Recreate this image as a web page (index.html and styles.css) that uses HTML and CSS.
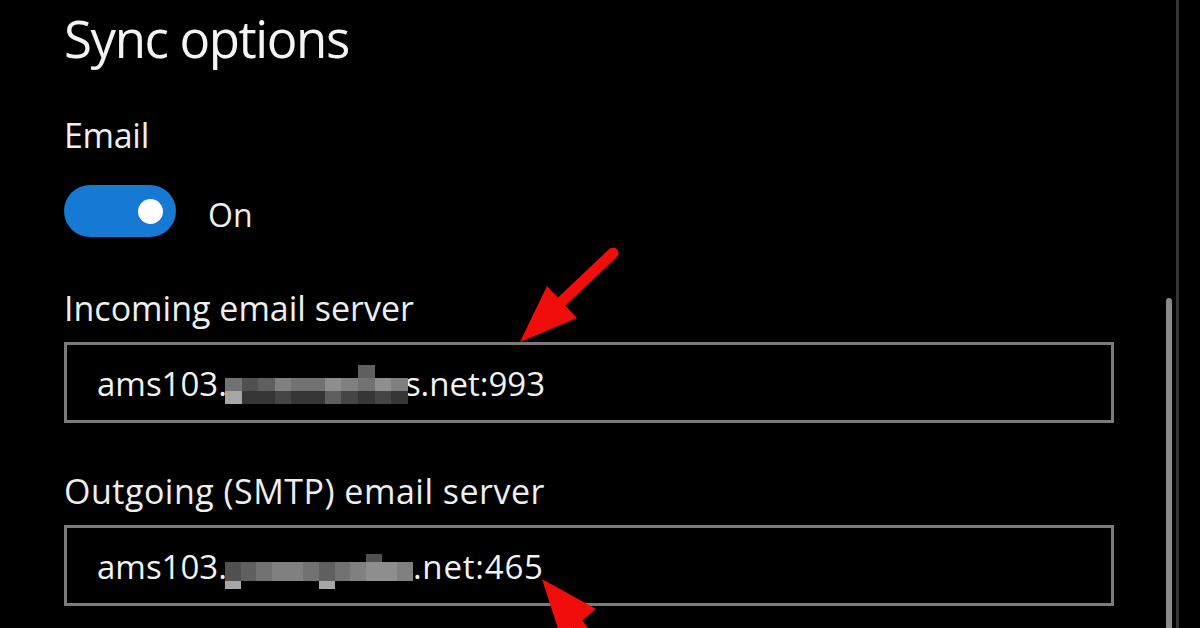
FILE: index.html
```html
<!DOCTYPE html>
<html lang="en">
<head>
<meta charset="utf-8">
<title>Sync options</title>
<link rel="stylesheet" href="styles.css">
</head>
<body>
<div class="page">
  <main class="panel">
    <h1 class="title">Sync options</h1>
    <div class="label label-email">Email</div>
    <div class="toggle-row">
      <span class="toggle"><span class="knob"></span></span>
      <span class="toggle-text">On</span>
    </div>
    <div class="label label-field">Incoming email server</div>
    <div class="field">
      <span class="val">ams103.</span><span class="pix pix-a"><i></i><i></i><i></i><i></i><i></i><i></i><i></i><i></i><i class="g4"></i><i></i><i></i><i class="g5"></i><i class="g3"></i><i class="g4"></i><i class="g6"></i><i class="g5"></i><i class="g5"></i><i class="g7"></i><i class="g6"></i><i class="g5"></i><i class="g7"></i><i class="g6"></i><i class="g8"></i><i class="g1"></i><i class="g1"></i><i class="g2"></i><i class="g1"></i><i class="g1"></i><i class="g4"></i><i class="g2"></i><i class="g1"></i><i class="g2"></i><i class="g1"></i></span><span class="val after">s.net:993</span>
    </div>
    <div class="label label-field label-out">Outgoing (SMTP) email server</div>
    <div class="field">
      <span class="val">ams103.</span><span class="pix pix-b"><i></i><i></i><i></i><i></i><i></i><i></i><i></i><i></i><i></i><i class="g3"></i><i></i><i></i><i class="g3"></i><i class="g4"></i><i class="g5"></i><i class="g6"></i><i class="g6"></i><i class="g5"></i><i class="g4"></i><i class="g5"></i><i class="g6"></i><i class="g7"></i><i class="g7"></i><i class="g6"></i><i class="g8"></i><i></i><i></i><i></i><i></i><i></i><i class="g8"></i><i></i><i></i><i></i><i></i><i></i></span><span class="val after2">.net:465</span>
    </div>
  </main>
  <div class="scrolltrack"><span class="thumb"></span></div>
  <div class="divider"></div>
  <svg class="arrows" width="1200" height="628" viewBox="0 0 1200 628" aria-hidden="true">
    <line x1="613" y1="253" x2="556" y2="307" stroke="#f20d0d" stroke-width="11" stroke-linecap="round"/>
    <polygon points="520,342 547,286 577,318" fill="#f20d0d"/>
    <line x1="575" y1="620" x2="615" y2="672" stroke="#f20d0d" stroke-width="11" stroke-linecap="round"/>
    <polygon points="542,579 596,609 561,638" fill="#f20d0d"/>
  </svg>
</div>
</body>
</html>
```
FILE: styles.css
```css
html, body {
  margin: 0;
  padding: 0;
  background: #000;
}

body {
  font-family: "Open Sans", "Noto Sans", sans-serif;
  color: #f2f2f2;
}

.page {
  position: relative;
  display: flex;
  width: 1200px;
  height: 628px;
  overflow: hidden;
  background: #000;
}

.panel {
  box-sizing: border-box;
  width: 1114px;
  padding: 8px 0 0 64px;
  display: flex;
  flex-direction: column;
  align-items: stretch;
}

.title {
  margin: 0;
  font-size: 51px;
  line-height: 60px;
  font-weight: 400;
  letter-spacing: -1.4px;
  color: #f4f4f4;
}

.label {
  font-size: 34px;
  line-height: 40px;
  color: #eeeeee;
}

.label-email {
  margin-top: 47px;
  letter-spacing: -0.3px;
}

.toggle-row {
  margin-top: 30px;
  display: flex;
  align-items: center;
  gap: 32px;
}

.toggle {
  box-sizing: border-box;
  width: 112px;
  height: 52px;
  border-radius: 26px;
  background: #1679d4;
  display: flex;
  align-items: center;
  justify-content: flex-end;
  padding-right: 13px;
}

.knob {
  width: 25px;
  height: 25px;
  border-radius: 50%;
  background: #ffffff;
}

.toggle-text {
  font-size: 32px;
  line-height: 40px;
  padding-top: 8px;
  color: #eeeeee;
}

.label-field {
  margin-top: 51px;
}

.label-out {
  margin-top: 48px;
  letter-spacing: 0.5px;
}

.field {
  box-sizing: border-box;
  margin-top: 14px;
  height: 81px;
  border: 3px solid #7b7b7b;
  padding: 2px 0 0 30px;
  display: flex;
  align-items: center;
  font-size: 33px;
  line-height: 40px;
  color: #f2f2f2;
  white-space: nowrap;
}

.val {
  display: inline-block;
}

.pix {
  display: inline-grid;
  position: relative;
  z-index: 1;
  align-self: center;
}

.pix-a {
  width: 183px;
  grid-template-columns: repeat(11, 1fr);
  grid-template-rows: 13px 13px 13px;
  margin: 2px 0 0 -2px;
}

.after {
  margin-left: -3px;
}

.pix-b {
  width: 188px;
  grid-template-columns: repeat(12, 1fr);
  grid-template-rows: 8px 19px 8px;
  margin: 10px 0 0 -2px;
}

.after2 {
  margin-left: 0;
  letter-spacing: 0.8px;
}

.pix i {
  display: block;
}

.g1 { background: #363636; }
.g2 { background: #454545; }
.g3 { background: #505050; }
.g4 { background: #5f5f5f; }
.g5 { background: #727272; }
.g6 { background: #808080; }
.g7 { background: #8e8e8e; }
.g8 { background: #a6a6a6; }

.scrolltrack {
  box-sizing: border-box;
  margin-left: 52px;
  width: 6px;
  height: 628px;
  padding-top: 298px;
  display: flex;
  flex-direction: column;
}

.thumb {
  flex: 1;
  background: #8a8a8a;
  border-radius: 3px 3px 0 0;
}

.divider {
  margin-left: 4px;
  width: 3px;
  height: 628px;
  background: #343434;
}

.arrows {
  position: absolute;
  left: 0;
  top: 0;
  pointer-events: none;
}
```
